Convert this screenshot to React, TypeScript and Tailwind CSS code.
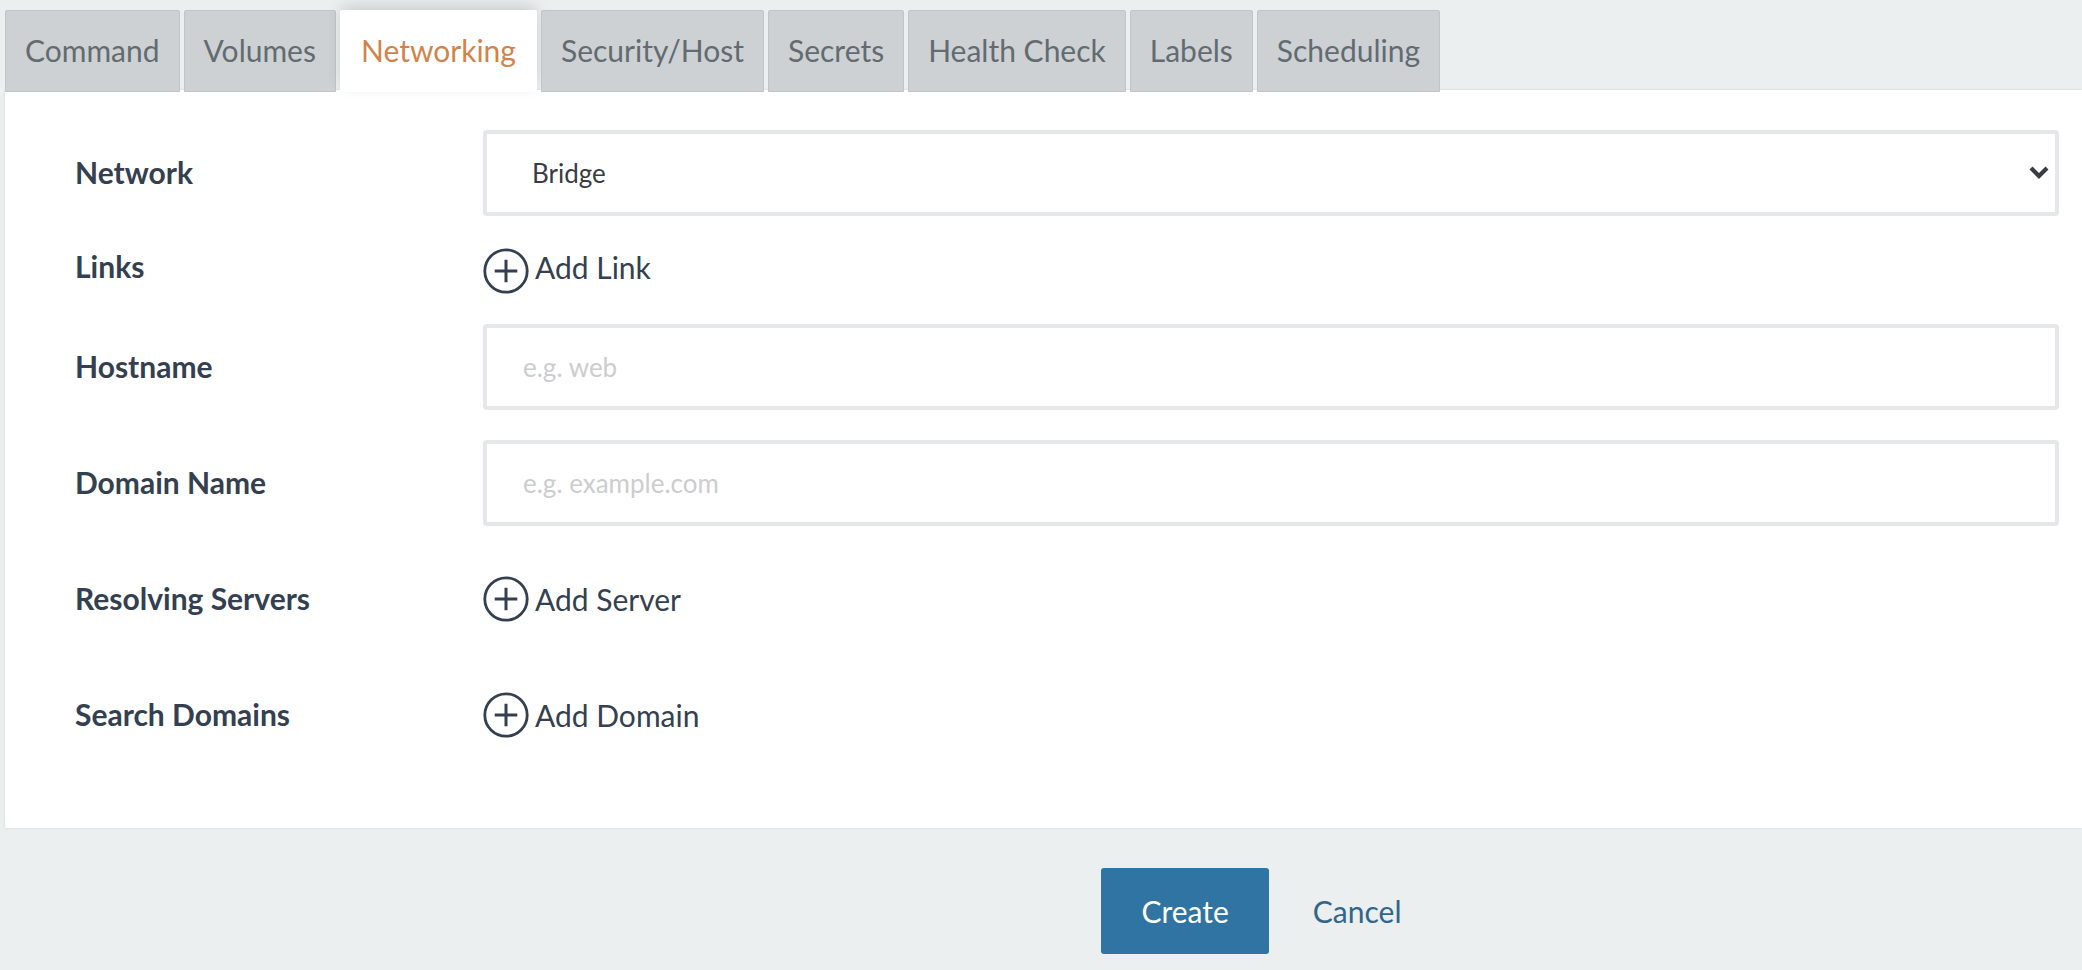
import { useState, type ReactNode } from "react";

const tabs = [
  "Command",
  "Volumes",
  "Networking",
  "Security/Host",
  "Secrets",
  "Health Check",
  "Labels",
  "Scheduling",
];

const fieldClass =
  "block h-[86px] w-full rounded-[4px] border-4 border-[#e6e7e9] bg-white text-[26px] text-[#3a3c45] outline-none focus:border-[#c9d3dc]";

const labelClass = "pb-[2px] text-[30px] leading-9 font-bold text-[#34404f]";

function Row({ label, children }: { label: ReactNode; children: ReactNode }) {
  return (
    <div className="grid grid-cols-[408px_minmax(0,1fr)] items-center">
      {label}
      {children}
    </div>
  );
}

function PlusCircle() {
  return (
    <svg className="size-[46px] shrink-0" viewBox="0 0 46 46" fill="none" stroke="currentColor" aria-hidden="true">
      <circle cx="23" cy="23" r="21.2" strokeWidth="2.8" />
      <path d="M11.7 23h22.6M23 11.7v22.6" strokeWidth="3" />
    </svg>
  );
}

function AddButton({ children, low = false }: { children: ReactNode; low?: boolean }) {
  return (
    <button
      type="button"
      className={`flex cursor-pointer items-center gap-[6px] justify-self-start text-[30px] leading-9 text-[#34404f] ${
        low ? "h-[42px]" : "h-[46px]"
      }`}
    >
      <span className={low ? "pt-2" : ""}>
        <PlusCircle />
      </span>
      {children}
    </button>
  );
}

export default function App() {
  const [active, setActive] = useState("Networking");

  return (
    <main className="min-h-screen bg-[#ebeff0] pt-[10px] pb-4 pl-[5px] font-['Lato',sans-serif]">
      <div role="tablist" className="relative flex gap-1">
        {tabs.map((tab) => (
          <button
            key={tab}
            type="button"
            role="tab"
            aria-selected={tab === active}
            onClick={() => setActive(tab)}
            className={
              tab === active
                ? "h-[82px] cursor-pointer rounded-t-[2px] bg-white px-[21px] pb-[2px] text-[30px] text-[#d1834a] shadow-[0_-5px_15px_-2px_rgba(0,0,0,0.16)]"
                : "h-[82px] cursor-pointer rounded-t-[2px] border border-[#c0c5c8] bg-[#cdd1d4] px-[19px] pb-[2px] text-[30px] text-[#636b71]"
            }
          >
            {tab}
          </button>
        ))}
      </div>

      <form onSubmit={(event) => event.preventDefault()}>
        <section className="-mt-[2px] flex flex-col gap-[30px] bg-white pt-10 pr-[23px] pb-[90px] pl-[70px] shadow-[0_0_2px_rgba(0,0,0,0.12)]">
          <Row label={<label htmlFor="network" className={labelClass}>Network</label>}>
            <div className="relative">
              <select id="network" defaultValue="bridge" className={`${fieldClass} appearance-none pr-12 pl-[45px]`}>
                <option value="bridge">Bridge</option>
                <option value="host">Host</option>
                <option value="none">None</option>
              </select>
              <svg
                className="pointer-events-none absolute top-[36px] right-[10px] h-[13px] w-5 text-[#3a3c45]"
                viewBox="0 0 20 13"
                fill="none"
                stroke="currentColor"
                strokeWidth="4.2"
                aria-hidden="true"
              >
                <path d="M2 2l8 8 8-8" />
              </svg>
            </div>
          </Row>

          <div className="pb-[6px]">
            <Row label={<span className={labelClass}>Links</span>}>
              <AddButton low>Add Link</AddButton>
            </Row>
          </div>

          <Row label={<label htmlFor="hostname" className={labelClass}>Hostname</label>}>
            <input
              id="hostname"
              type="text"
              placeholder="e.g. web"
              className={`${fieldClass} px-9 placeholder:text-[#cccdcf]`}
            />
          </Row>

          <Row label={<label htmlFor="domain" className={labelClass}>Domain Name</label>}>
            <input
              id="domain"
              type="text"
              placeholder="e.g. example.com"
              className={`${fieldClass} px-9 placeholder:text-[#cccdcf]`}
            />
          </Row>

          <div className="flex flex-col gap-[70px] pt-5">
            <Row label={<span className={labelClass}>Resolving Servers</span>}>
              <AddButton>Add Server</AddButton>
            </Row>
            <Row label={<span className={labelClass}>Search Domains</span>}>
              <AddButton>Add Domain</AddButton>
            </Row>
          </div>
        </section>

        <div className="flex justify-center gap-1 pt-10 pl-[456px]">
          <button
            type="submit"
            className="h-[86px] cursor-pointer rounded-[3px] bg-[#3074a3] px-10 text-[30px] text-white"
          >
            Create
          </button>
          <button type="button" className="h-[86px] cursor-pointer px-10 text-[30px] text-[#33658b]">
            Cancel
          </button>
        </div>
      </form>
    </main>
  );
}
